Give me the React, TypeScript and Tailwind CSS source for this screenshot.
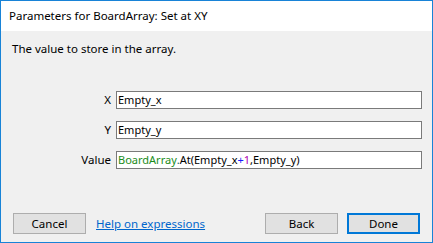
const FIELDS = [
  { label: "X", value: "Empty_x" },
  { label: "Y", value: "Empty_y" },
];

function Field({ label, children }: { label: string; children: React.ReactNode }) {
  return (
    <div className="flex h-[18px] items-center">
      <span className="w-[115px] pr-[5px] text-right text-[11.5px] text-black">{label}</span>
      <div className="flex h-[18px] w-[306px] items-center border border-[#7a7a7a] bg-white pl-[1px] text-[11px] text-black">
        {children}
      </div>
    </div>
  );
}

export default function App() {
  return (
    <div
      className="flex h-[243px] w-[433px] flex-col border border-[#1883d7] bg-[#f0f0f0]"
      style={{ fontFamily: '"Noto Sans", "Open Sans", sans-serif' }}
    >
      <div className="flex h-[30px] items-center bg-white pl-[8px] text-[11.5px] text-black">
        Parameters for BoardArray: Set at XY
      </div>

      <div className="flex flex-1 flex-col">
        <p className="mt-[10px] pl-[11px] text-[11.5px] leading-[16px] text-black">
          The value to store in the array.
        </p>

        <div className="mt-[34px] flex flex-col gap-[12px]">
          {FIELDS.map((field) => (
            <Field key={field.label} label={field.label}>
              {field.value}
            </Field>
          ))}
          <Field label="Value">
            <span className="text-[#1a8c1a]">BoardArray</span>
            <span className="text-[#1a5e5e]">.</span>
            <span>At(Empty_x</span>
            <span className="text-[#1a1aff]">+</span>
            <span className="text-[#b000b0]">1</span>
            <span>,Empty_y)</span>
          </Field>
        </div>

        <div className="mt-auto mb-[8px] flex items-center px-[12px]">
          <button className="h-[21px] w-[73px] border border-[#adadad] bg-[#e1e1e1] text-[11.5px] text-black">
            Cancel
          </button>
          <a className="ml-[10px] text-[11.5px] text-[#0066cc] underline" href="#">
            Help on expressions
          </a>
          <button className="ml-auto h-[21px] w-[73px] border border-[#adadad] bg-[#e1e1e1] text-[11.5px] text-black">
            Back
          </button>
          <button className="ml-[9px] h-[21px] w-[73px] border-2 border-[#0078d7] bg-[#e1e1e1] text-[11.5px] text-black">
            Done
          </button>
        </div>
      </div>
    </div>
  );
}
